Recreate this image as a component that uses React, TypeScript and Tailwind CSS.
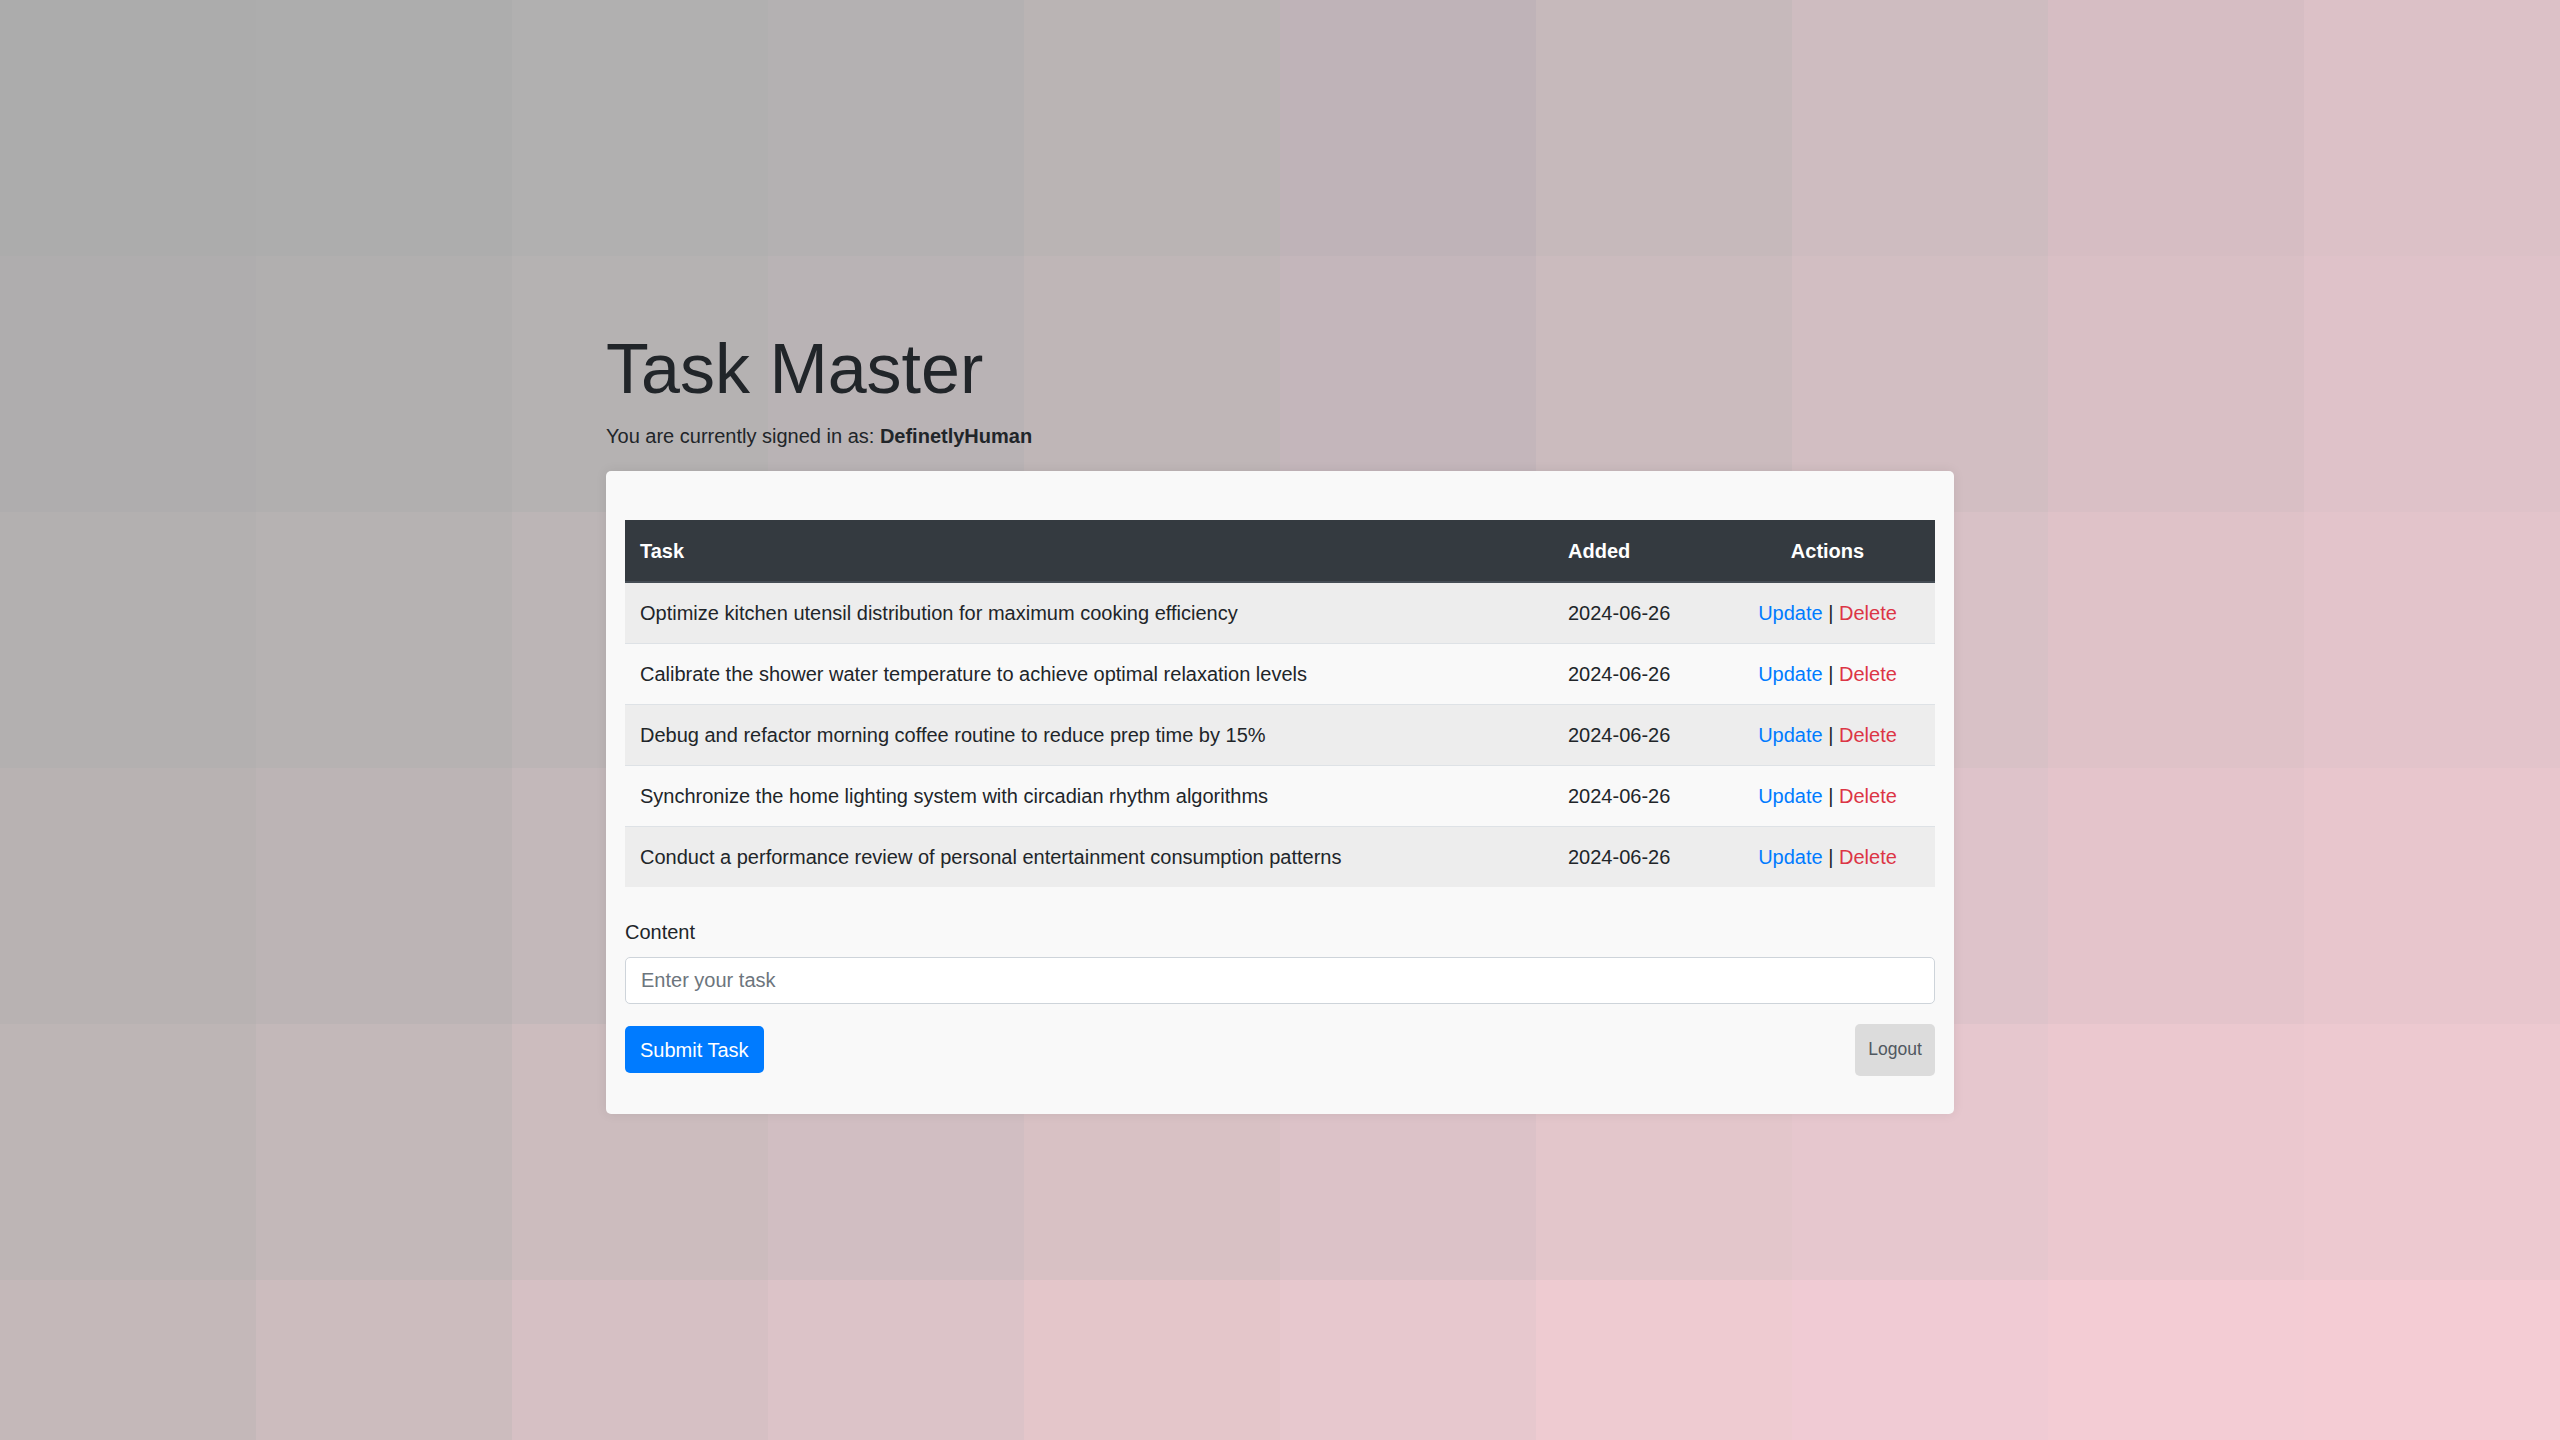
import React from "react";

const tasks = [
  "Optimize kitchen utensil distribution for maximum cooking efficiency",
  "Calibrate the shower water temperature to achieve optimal relaxation levels",
  "Debug and refactor morning coffee routine to reduce prep time by 15%",
  "Synchronize the home lighting system with circadian rhythm algorithms",
  "Conduct a performance review of personal entertainment consumption patterns",
];

// top and bottom tile rows of the backdrop, sampled from the design
const topRow = ["#acacac", "#adadad", "#b1b0b0", "#b4b1b2", "#bab4b4", "#bfb3b8", "#c6b9bb", "#cebcc0", "#d6bdc3", "#dcc1c7"];
const bottomRow = ["#c4b8b9", "#ccbcbe", "#d6c0c4", "#dcc3c8", "#e4c6ca", "#e7c8ce", "#eecbd1", "#f0cbd4", "#f3ccd4", "#f4ccd4"];
const rowMix = [0, 0.12, 0.3, 0.48, 0.72, 1];

function mix(a: string, b: string, t: number) {
  const pa = [1, 3, 5].map((i) => parseInt(a.slice(i, i + 2), 16));
  const pb = [1, 3, 5].map((i) => parseInt(b.slice(i, i + 2), 16));
  const c = pa.map((v, i) => Math.round(v + (pb[i] - v) * t));
  return `rgb(${c[0]}, ${c[1]}, ${c[2]})`;
}

function Backdrop() {
  return (
    <div className="col-start-1 row-start-1 grid grid-cols-10 auto-rows-[256px] h-[1440px] overflow-hidden">
      {rowMix.map((t, r) =>
        topRow.map((c, i) => (
          <div key={`${r}-${i}`} style={{ backgroundColor: mix(c, bottomRow[i], t) }} />
        ))
      )}
    </div>
  );
}

export default function App() {
  return (
    <div className="grid h-[1440px] w-full overflow-hidden font-['Liberation_Sans',Arial,sans-serif] text-[#212529]">
      <Backdrop />

      <div className="col-start-1 row-start-1 flex items-center justify-center">
        <div className="w-[1348px]">
          <h1 className="text-[70px] leading-[84px] font-normal mb-[10px]">Task Master</h1>
          <p className="text-[20px] leading-[30px] mb-[20px]">
            You are currently signed in as: <b className="font-bold">DefinetlyHuman</b>
          </p>

          {/* Card */}
          <div className="bg-[#f9f9f9] rounded-[5px] shadow-[0_0_12px_rgba(0,0,0,0.08)] pt-[49px] px-[19px] pb-[38px]">
            <table className="w-[1310px] table-fixed border-collapse text-[20px] leading-[30px] mb-[30px]">
              <colgroup>
                <col className="w-[928px]" />
                <col className="w-[167px]" />
                <col className="w-[215px]" />
              </colgroup>
              <thead>
                <tr className="bg-[#343a40] text-white">
                  <th className="text-left font-bold px-[15px] py-[15px] border-t border-t-[#343a40] border-b-2 border-b-[#454d55]">Task</th>
                  <th className="text-left font-bold px-[15px] py-[15px] border-t border-t-[#343a40] border-b-2 border-b-[#454d55]">Added</th>
                  <th className="text-center font-bold px-[15px] py-[15px] border-t border-t-[#343a40] border-b-2 border-b-[#454d55]">Actions</th>
                </tr>
              </thead>
              <tbody>
                {tasks.map((task, i) => (
                  <tr key={task} className={i % 2 === 0 ? "bg-[#ededed]" : "bg-[#f9f9f9]"}>
                    <td className="px-[15px] py-[15px] border-t border-[#dee2e6] whitespace-nowrap">{task}</td>
                    <td className="px-[15px] py-[15px] border-t border-[#dee2e6]">2024-06-26</td>
                    <td className="px-[15px] py-[15px] border-t border-[#dee2e6] text-center">
                      <a href="#" className="text-[#007bff]">Update</a> |{" "}
                      <a href="#" className="text-[#dc3545]">Delete</a>
                    </td>
                  </tr>
                ))}
              </tbody>
            </table>

            <label className="block text-[20px] leading-[30px] mb-[10px]">Content</label>
            <input
              type="text"
              placeholder="Enter your task"
              className="block w-full h-[47px] bg-white border border-[#ced4da] rounded-[5px] px-[15px] text-[20px] placeholder:text-[#6c757d] outline-none"
            />

            <div className="flex items-center justify-between mt-[20px] h-[52px]">
              <button className="h-[47px] px-[15px] bg-[#007bff] text-white text-[20px] rounded-[5px]">Submit Task</button>
              <button className="h-[52px] w-[80px] bg-[#dcdcdc] text-[#505860] text-[17.5px] rounded-[5px]">Logout</button>
            </div>
          </div>
        </div>
      </div>
    </div>
  );
}
